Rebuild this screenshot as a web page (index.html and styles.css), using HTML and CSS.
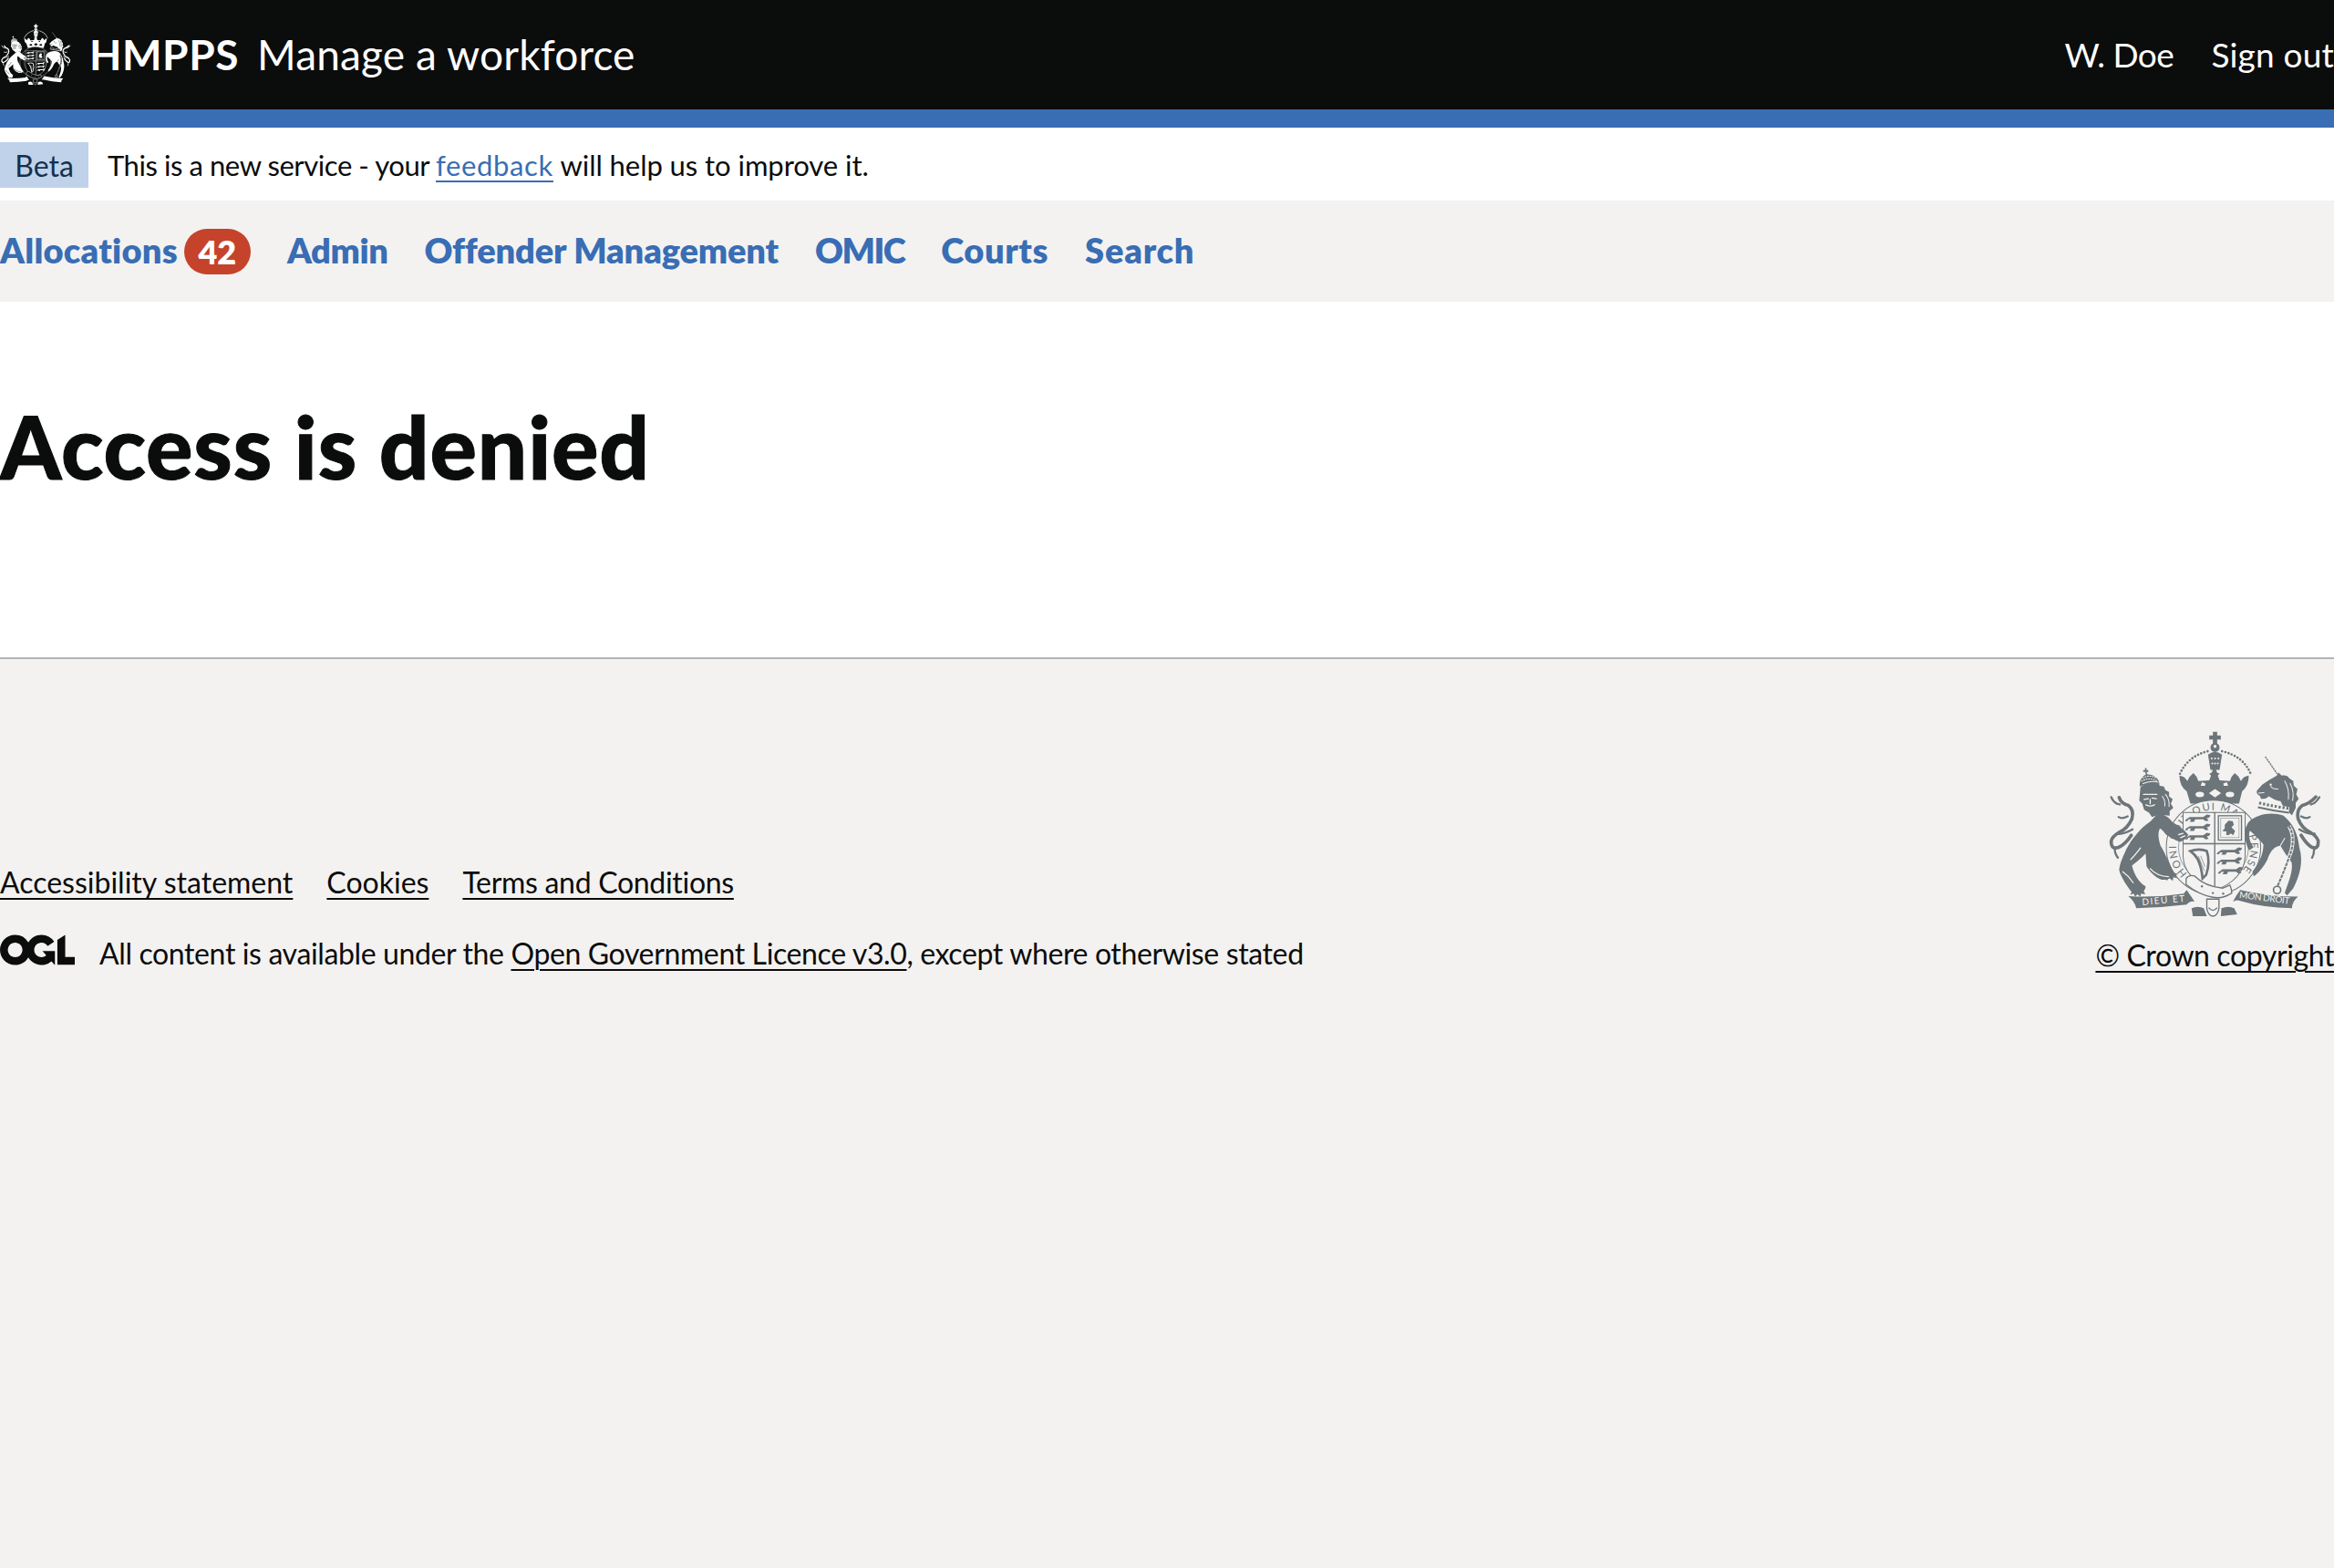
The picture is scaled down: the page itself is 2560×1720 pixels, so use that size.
FILE: index.html
```html
<!DOCTYPE html>
<html lang="en">
<head>
<meta charset="utf-8">
<title>Access is denied</title>
<link rel="stylesheet" href="styles.css">
</head>
<body>
<svg class="defs" aria-hidden="true">
  <defs>
    <path id="passant" d="M0 10l12-8h44l12-8l12 2l-4 8l-8 2l6 8l-10 2l-8-6h-26l-4 8h-14l4-8h-8l-4 6h-8z"/>
  </defs>
  <symbol id="arms-back" viewBox="155 65 710 620">
    <g fill="currentColor">
      <!-- crown -->
      <path d="M506 70h14v12h12v14h-12v14h-14V96h-12V82h12z"/>
      <circle cx="513" cy="122" r="15"/>
      <path d="M490 145q23-18 46 0l-8 50h-30z"/>
      <path d="M396 214q18 2 26 18q6-16 20-26q12 10 16 26l36-2l6-16l-6-6l8-4l5-12h8l5 12l8 4l-6 6l6 16l34 2q4-16 16-26q14 10 20 26q8-16 26-18q0 34-22 52l-10 40H432l-12-40q-24-18-24-52z"/>
      <!-- scrolls -->
      <path d="M228 610q92 6 182-8l10-12l26 38q-16-4-26 10q-80 10-166 12q-4-22-26-40z"/>
      <path d="M596 590q90 22 190 22q-20 16-20 38q-96-2-170-24q-12-6-24 2q10-20 24-38z"/>
      <path d="M436 650q20-10 40 0l10 26h-46zM534 650q24-10 42 0l10 20l-54 6z"/>
    </g>
    <g fill="none" stroke="currentColor" stroke-linecap="round">
      <!-- mantling, left -->
      <path stroke-width="11" d="M238 410q-20 30-42 40q-26 8-24-22q4-14 24-26q30-14 44-46q8-30-12-44q-24-6-30-26"/>
      <path stroke-width="7" d="M190 405q20 4 52-14M196 350q10 8 30-2M184 452q-2 18 10 32M172 285q8 20 28 24"/>
      <!-- mantling, right -->
      <path stroke-width="11" d="M796 410q18 30 36 40q22 8 20-22q-4-14-24-26q-30-14-42-46q-6-30 14-44q24-6 44-28"/>
      <path stroke-width="7" d="M840 405q-20 4-50-14M824 350q-10 8-28-2M838 452q2 18-6 32M856 285q-12 20-28 24"/>
    </g>
    <!-- garter -->
    <circle cx="508" cy="450" r="155" fill="var(--crest-bg)" stroke="currentColor" stroke-width="3"/>
    <circle cx="508" cy="450" r="115" fill="none" stroke="currentColor" stroke-width="2"/>
  </symbol>
  <symbol id="arms-front" viewBox="155 65 710 620">
    <!-- shield -->
    <path d="M408 335H612V480Q608 556 512 592Q412 556 408 480Z" fill="var(--crest-bg)" stroke="currentColor" stroke-width="3"/>
    <path d="M512 335V592M408 438H612" stroke="currentColor" stroke-width="4"/>
    <g fill="currentColor">
      <use href="#passant" x="418" y="348"/>
      <use href="#passant" x="418" y="378"/>
      <use href="#passant" x="418" y="408"/>
      <use href="#passant" x="522" y="456"/>
      <use href="#passant" x="522" y="488"/>
      <use href="#passant" x="526" y="520"/>
      <path d="M545 376l12-14l14 2l4 12l-8 8l12 12l-6 14l-8-6l-8 6l-8-2l2-10l-14-2l8-8z"/>
    </g>
    <rect x="524" y="346" width="76" height="80" fill="none" stroke="currentColor" stroke-width="4"/>
    <rect x="532" y="354" width="60" height="64" fill="none" stroke="currentColor" stroke-width="1.5"/>
    <!-- harp -->
    <path d="M432 462q30-10 54 0q12 36-2 78l-12 12q-4-40-16-64q-10-16-24-26z" fill="none" stroke="currentColor" stroke-width="8"/>
    <path d="M450 480l24 60M458 478l20 50M466 478l14 36" stroke="currentColor" stroke-width="2"/>
    <g fill="currentColor">
      <!-- lion -->
      <path d="M322 342C345 338 360 350 372 366C390 378 410 390 425 408C420 420 410 428 398 432C385 428 370 420 352 408C345 400 340 392 332 388C325 400 326 420 334 445C350 470 365 510 380 535C372 548 358 558 338 556C318 550 298 530 288 512L285 470C272 485 252 500 240 510C248 540 262 565 285 578C285 592 272 600 262 600L240 598C222 575 205 550 198 525C200 500 212 478 222 455C240 420 270 385 300 365Z"/>
      <path d="M240 596l-6 10l12-4l4 10l8-8l10 8l2-10l14 2l-6-12zM370 530l22 8l-10 4l8 10l-14-4l-2 12l-12-10l-8 10l-4-12z"/>
      <path d="M268 252C280 240 300 238 318 240L332 248L345 250L350 262L362 268L362 282L374 292L368 306L376 320L364 330L364 346L346 344L336 352L318 346L306 350L296 336L280 326L274 306L264 296Z"/>
      <path d="M266 250C262 226 280 212 286 210l-3-8h-6v-6h6v-7h5v7h6v6h-6l3 8C312 210 334 224 330 250C310 240 285 242 266 250Z"/>
      <!-- unicorn -->
      <path d="M622 368C650 340 700 332 738 346C765 368 785 400 790 450C805 500 790 545 770 585L750 608L742 600C752 570 770 530 765 500C750 480 740 465 728 445C712 445 695 460 685 490C672 515 655 535 640 545L636 530C655 505 672 475 672 440C660 425 640 405 628 395C622 405 625 430 640 450L625 460C610 430 606 395 622 368Z"/>
      <path d="M652 262L668 244C684 232 702 222 716 214L722 204L732 214C742 212 752 214 756 222L770 232L772 248L784 258L780 276L788 290L778 304L778 320L766 344L752 332C742 324 734 312 728 298C712 296 696 286 690 282C682 290 672 292 664 290L660 280C654 278 646 270 652 262Z"/>
    </g>
    <!-- lion mane and face detail -->
    <g fill="none" stroke="var(--crest-bg)" stroke-linecap="round">
      <path stroke-width="4" d="M278 276h44M280 292l14-2M306 288l14 2M286 310q14 8 28 0M300 292v14"/>
      <path stroke-width="3" d="M340 282q10 14 8 32M350 276q14 16 12 40M276 240q30-10 50-4"/>
      <path stroke-width="3" stroke-dasharray="3 5" d="M272 232q24-14 52 0M276 222q20-12 44 0"/>
      <path stroke-width="4" d="M352 412l-14-14M400 418l14-6M408 404l-14 4M210 530q20 14 34 36M300 520q24 26 60 26M268 452q-18 24-32 38"/>
      <!-- unicorn collar -->
      <path stroke-width="26" stroke-linecap="butt" d="M656 312q50 12 100 18"/>
      <path stroke-width="3" d="M696 250q8 10 24 8M742 232q16 26 12 60M760 240q14 26 8 56M742 420q-8 14-14 24M656 272l18-2"/>
    </g>
    <path d="M654 318q50 12 102 18" fill="none" stroke="currentColor" stroke-width="6"/>
    <path d="M658 304q50 12 98 18" fill="none" stroke="currentColor" stroke-width="9" stroke-dasharray="7 6"/>
    <circle cx="696" cy="244" r="3.5" fill="var(--crest-bg)"/>
    <!-- horn and chain -->
    <path d="M678 152l42 60" stroke="currentColor" stroke-width="4" stroke-dasharray="7 2"/>
    <path d="M756 380q20 30 8 80q-20 60-46 118" fill="none" stroke="var(--crest-bg)" stroke-width="12"/>
    <path d="M756 380q20 30 8 80q-20 60-46 118" fill="none" stroke="currentColor" stroke-width="6" stroke-dasharray="11 3"/>
    <circle cx="717" cy="590" r="12" fill="none" stroke="currentColor" stroke-width="5"/>
    <!-- ribbon and buckle -->
    <path d="M418 552q10-14 28-8q34 34 92 40l24-10q6 12 6 26q-30 20-62 14q-46-8-88-42z" fill="var(--crest-bg)" stroke="currentColor" stroke-width="4"/>
    <path d="M486 620h40v30q-4 24-20 26q-16-2-20-26z" fill="var(--crest-bg)" stroke="currentColor" stroke-width="4"/>
    <path d="M492 648q14 18 28 0" fill="none" stroke="currentColor" stroke-width="4"/>
    <g fill="currentColor"><circle cx="470" cy="578" r="3.5"/><circle cx="506" cy="600" r="3.5"/><circle cx="540" cy="602" r="3.5"/></g>
    <!-- crown jewels and arches -->
    <g fill="var(--crest-bg)">
      <ellipse cx="463" cy="276" rx="14" ry="9"/>
      <path d="M513 258l20 14l-20 14l-20-14z"/>
      <ellipse cx="562" cy="276" rx="14" ry="9"/>
      <circle cx="502" cy="158" r="3"/><circle cx="513" cy="158" r="3"/><circle cx="524" cy="158" r="3"/>
      <circle cx="504" cy="174" r="3"/><circle cx="513" cy="174" r="3"/><circle cx="522" cy="174" r="3"/>
      <circle cx="513" cy="118" r="5"/>
      <path d="M470 236l12 4l-2 8h-14zM552 236l-12 4l2 8h14z"/>
    </g>
    <path d="M398 208q26-58 92-74M536 134q70 16 94 74" fill="none" stroke="currentColor" stroke-width="8" stroke-linecap="round" stroke-dasharray="0 11"/>
  </symbol>
</svg>

<header class="masthead">
  <div class="brand">
    <svg class="crest crest-head" viewBox="0 0 78 68" aria-hidden="true">
      <use href="#arms-back" width="78" height="68"/>
      <use href="#arms-front" width="78" height="68"/>
    </svg>
    <span class="org">HMPPS</span>
    <span class="service">Manage a workforce</span>
  </div>
  <div class="account">
    <a class="account-link account-user" href="#">W. Doe</a>
    <a class="account-link account-out" href="#">Sign out</a>
  </div>
</header>
<div class="stripe"></div>

<div class="phase">
  <strong class="phase-tag">Beta</strong>
  <span class="phase-text">This is a new service - your <a class="link" href="#">feedback</a> <span class="phase-tail">will help us to improve it.</span></span>
</div>

<nav class="nav">
  <a class="nav-item nav-allocations" href="#">Allocations <span class="badge">42</span></a>
  <a class="nav-item nav-admin" href="#">Admin</a>
  <a class="nav-item nav-offender" href="#">Offender Management</a>
  <a class="nav-item nav-omic" href="#">OMIC</a>
  <a class="nav-item nav-courts" href="#">Courts</a>
  <a class="nav-item nav-search" href="#">Search</a>
</nav>

<main class="main">
  <h1 class="title">Access is denied</h1>
</main>

<footer class="footer">
  <div class="footer-left">
    <ul class="footer-links">
      <li><a class="footer-link" href="#">Accessibility statement</a></li>
      <li><a class="footer-link" href="#">Cookies</a></li>
      <li><a class="footer-link terms" href="#">Terms and Conditions</a></li>
    </ul>
    <div class="licence">
      <svg class="ogl" viewBox="0 0 483.2 195.7" aria-hidden="true"><path fill="currentColor" d="M421.5 142.8V.1l-50.7 32.3v161.1h112.4v-50.7zm-122.3-9.6A47.12 47.12 0 0 1 221 97.8c0-26 21.1-47.1 47.1-47.1 16.7 0 31.4 8.7 39.7 21.8l42.7-27.2A97.63 97.63 0 0 0 268.1 0c-36.5 0-68.3 20.1-85.1 49.7A98 98 0 0 0 97.8 0C43.9 0 0 43.9 0 97.8s43.9 97.8 97.8 97.8c36.5 0 68.3-20.1 85.1-49.7a97.76 97.76 0 0 0 149.6 25.4l19.4 22.2h3v-87.8h-80l24.3 27.5zM97.8 145c-26 0-47.1-21.1-47.1-47.1s21.1-47.1 47.1-47.1 47.2 21 47.2 47S123.8 145 97.8 145"/></svg>
      <span class="licence-text">All content is available under the <a class="footer-link" href="#">Open Government Licence v3.0</a>, except where otherwise stated</span>
    </div>
  </div>
  <div class="footer-right">
    <svg class="crest crest-foot" viewBox="155 65 710 620" aria-hidden="true">
      <use href="#arms-back" x="155" y="65" width="710" height="620"/>
      <defs>
        <path id="garter-arc" d="M422 536A122 122 0 1 1 594 536"/>
      </defs>
      <text class="crest-word" textLength="560"><textPath href="#garter-arc">HONI SOIT QUI MAL Y PENSE</textPath></text>
      <use href="#arms-front" x="155" y="65" width="710" height="620"/>
      <text class="crest-motto" x="274" y="640" textLength="140" transform="rotate(-5 274 640)">DIEU ET</text>
      <text class="crest-motto" x="592" y="616" textLength="166" transform="rotate(7 592 616)">MON DROIT</text>
    </svg>
    <a class="footer-link" href="#">© Crown copyright</a>
  </div>
</footer>
</body>
</html>
```

FILE: styles.css
```css
* { box-sizing: border-box; }
html, body { margin: 0; padding: 0; }
body {
  min-height: 1720px;
  display: flex;
  flex-direction: column;
  font-family: "Lato", "Noto Sans", "Liberation Sans", sans-serif;
  color: #0b0c0c;
  background: #fff;
}
.defs { position: absolute; width: 0; height: 0; }

.masthead {
  height: 120px;
  background: #0b0c0c;
  color: #fff;
  display: flex;
  align-items: center;
  justify-content: space-between;
}
.brand { display: flex; align-items: center; }
.crest-head { width: 78px; height: 68px; color: #fff; --crest-bg: #0b0c0c; margin-right: 20px; }
.org { font-size: 46px; font-weight: 700; line-height: 1; width: 184px; letter-spacing: 0.6px; }
.service { font-size: 46px; line-height: 1; letter-spacing: 0.15px; }
.account { display: flex; gap: 41px; padding-bottom: 2px; }
.account-link { color: #fff; text-decoration: none; font-size: 37px; line-height: 1; }
.account-user { letter-spacing: -0.5px; }
.account-out { letter-spacing: 0.2px; }

.stripe { height: 20px; background: #396db4; }

.phase { height: 80px; padding-top: 2px; display: flex; align-items: center; font-size: 31px; }
.phase-tag { width: 97px; height: 50px; background: #bfd2e9; color: #12304f; font-size: 32px; font-weight: 400; display: flex; align-items: center; justify-content: center; margin-right: 21px; }
.phase-text { letter-spacing: -0.43px; }
.phase-tail { letter-spacing: -0.05px; }
.link { color: #396db4; letter-spacing: 0.65px; text-underline-offset: 5px; text-decoration-thickness: 2px; }

.nav { height: 111px; padding-bottom: 3px; background: #f3f2f1; display: flex; align-items: center; gap: 40px; }
.nav-item { color: #396db4; font-size: 38px; font-weight: 800; text-decoration: none; line-height: 50px; display: flex; align-items: center; }
.nav-allocations { letter-spacing: 0.25px; }
.nav-admin { letter-spacing: -0.4px; }
.nav-offender { letter-spacing: -0.15px; }
.nav-omic { letter-spacing: -1.5px; }
.nav-courts { letter-spacing: 0.6px; }
.nav-search { letter-spacing: 0.8px; }
.badge { display: inline-flex; align-items: center; justify-content: center; width: 73px; height: 50px; margin-left: 7px; border-radius: 25px; background: #c5432b; color: #fff; font-size: 36px; letter-spacing: 0; transform: translateY(2px); }

.main { height: 392px; border-bottom: 2px solid #b1b4b6; padding-top: 100px; }
.title { margin: 0; font-size: 96px; font-weight: 900; line-height: 1.2; letter-spacing: 0.9px; -webkit-text-stroke: 1px #0b0c0c; }

.footer { flex: 1; background: #f3f2f1; display: flex; justify-content: space-between; align-items: flex-start; padding-top: 78px; }
.footer-left { padding-top: 147px; font-size: 32px; }
.footer-links { list-style: none; margin: 0 0 38px; padding: 0; display: flex; gap: 37px; }
.footer-link { color: #0b0c0c; text-underline-offset: 5px; text-decoration-thickness: 2px; }
.terms { letter-spacing: -0.3px; }
.licence { display: flex; align-items: center; gap: 27px; }
.licence-text { letter-spacing: -0.37px; }
.ogl { width: 82px; height: 34px; color: #0b0c0c; margin-bottom: 6px; }
.footer-right { display: flex; flex-direction: column; align-items: flex-end; font-size: 32px; letter-spacing: -0.4px; }
.crest-foot { width: 237px; height: 207px; color: #6c7579; --crest-bg: #f3f2f1; margin-bottom: 20px; margin-right: 13px; letter-spacing: 0; }
.crest-word { font-size: 34px; fill: #6c7579; }
.crest-motto { font-size: 30px; fill: #f3f2f1; }
```
